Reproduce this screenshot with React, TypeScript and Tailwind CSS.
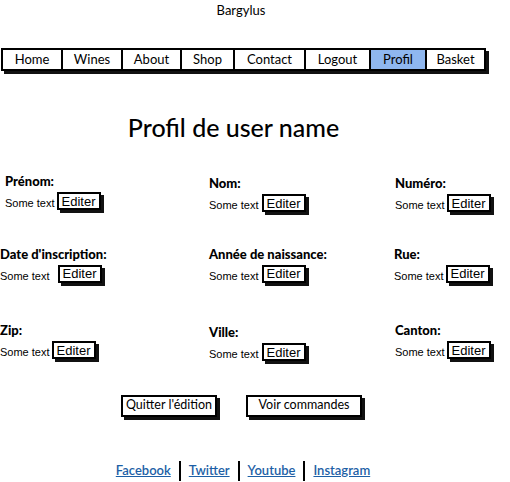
import React from 'react';

const NAV = [
  { label: 'Home', w: 'w-[58px]' },
  { label: 'Wines', w: 'w-[60px]' },
  { label: 'About', w: 'w-[59px]' },
  { label: 'Shop', w: 'w-[53px]' },
  { label: 'Contact', w: 'w-[71px]' },
  { label: 'Logout', w: 'w-[65px]' },
  { label: 'Profil', w: 'w-[56px]', active: true },
  { label: 'Basket', w: 'w-[59px]' },
];

type Field = { label: string; pad: string; gap: string; top: string };

const ROWS: Field[][] = [
  [
    { label: 'Prénom:', pad: 'pl-[5px]', gap: 'gap-[2px]', top: 'mt-0' },
    { label: 'Nom:', pad: 'pl-0', gap: 'gap-[3px]', top: 'mt-[2px]' },
    { label: 'Numéro:', pad: 'pl-[1px]', gap: 'gap-[2px]', top: 'mt-[2px]' },
  ],
  [
    { label: "Date d'inscription:", pad: 'pl-0', gap: 'gap-[8px]', top: 'mt-0' },
    { label: 'Année de naissance:', pad: 'pl-0', gap: 'gap-[3px]', top: 'mt-0' },
    { label: 'Rue:', pad: 'pl-0', gap: 'gap-[2px]', top: 'mt-0' },
  ],
  [
    { label: 'Zip:', pad: 'pl-0', gap: 'gap-[2px]', top: 'mt-0' },
    { label: 'Ville:', pad: 'pl-0', gap: 'gap-[3px]', top: 'mt-[2px]' },
    { label: 'Canton:', pad: 'pl-[1px]', gap: 'gap-[2px]', top: 'mt-0' },
  ],
];

function SketchButton({ children, className }: { children: React.ReactNode; className?: string }) {
  return (
    <button
      className={
        'border-2 border-black bg-white text-black leading-none whitespace-nowrap shadow-[3px_3px_0_#111] ' +
        (className ?? '')
      }
    >
      {children}
    </button>
  );
}

function FieldCell({ f }: { f: Field }) {
  return (
    <div className={`${f.pad} ${f.top}`}>
      <div className="font-['Lato',sans-serif] font-black text-[13px] leading-[14px] text-black">{f.label}</div>
      <div className={`flex items-center mt-[3px] ${f.gap}`}>
        <span className="font-['Liberation_Sans',Arial,sans-serif] text-[11px] text-black pt-[4px]">Some text</span>
        <SketchButton className="font-['Liberation_Sans',Arial,sans-serif] text-[13px] w-[44px] h-[18px]">
          Editer
        </SketchButton>
      </div>
    </div>
  );
}

export default function App() {
  return (
    <div className="w-[510px] h-[482px] bg-white text-black font-['Lato',sans-serif] overflow-hidden">
      {/* Header */}
      <div className="w-[482px] text-center text-[13px] leading-[16px] pt-[2px]">Bargylus</div>

      {/* Nav */}
      <nav className="mt-[30px] ml-[1px] flex w-fit border-2 border-black bg-white shadow-[3px_3px_0_#111]">
        {NAV.map((n, i) => (
          <div
            key={n.label}
            className={`${n.w} h-[19px] flex items-center justify-center text-[13px] ${
              i > 0 ? 'border-l-2 border-black' : ''
            } ${n.active ? 'bg-[#8fb7ef]' : ''}`}
          >
            {n.label}
          </div>
        ))}
      </nav>

      {/* Title */}
      <h1 className="mt-[42px] w-[467px] text-center text-[25px] leading-[28px] font-medium">Profil de user name</h1>

      {/* Fields */}
      <div className="mt-[33px] flex flex-col gap-[33px]">
        {ROWS.map((row, r) => (
          <div key={r} className={`grid grid-cols-[209px_185px_1fr] ${r === 2 ? 'mt-[6px]' : ''}`}>
            {row.map((f) => (
              <FieldCell key={f.label} f={f} />
            ))}
          </div>
        ))}
      </div>

      {/* Actions */}
      <div className="mt-[32px] flex gap-[29px] pl-[121px]">
        <SketchButton className="text-[12.5px] w-[96px] h-[22px]">Quitter l'édition</SketchButton>
        <SketchButton className="text-[12.5px] w-[116px] h-[22px]">Voir commandes</SketchButton>
      </div>

      {/* Footer */}
      <footer className="mt-[44px] flex items-center justify-center w-[486px] text-[13px] text-[#1d5fa6]">
        <a className="underline font-semibold">Facebook</a>
        <span className="mx-[8px] h-[20px] w-[2px] bg-black" />
        <a className="underline font-semibold">Twitter</a>
        <span className="mx-[8px] h-[20px] w-[2px] bg-black" />
        <a className="underline font-semibold">Youtube</a>
        <span className="mx-[8px] h-[20px] w-[2px] bg-black" />
        <a className="underline font-semibold">Instagram</a>
      </footer>
    </div>
  );
}
